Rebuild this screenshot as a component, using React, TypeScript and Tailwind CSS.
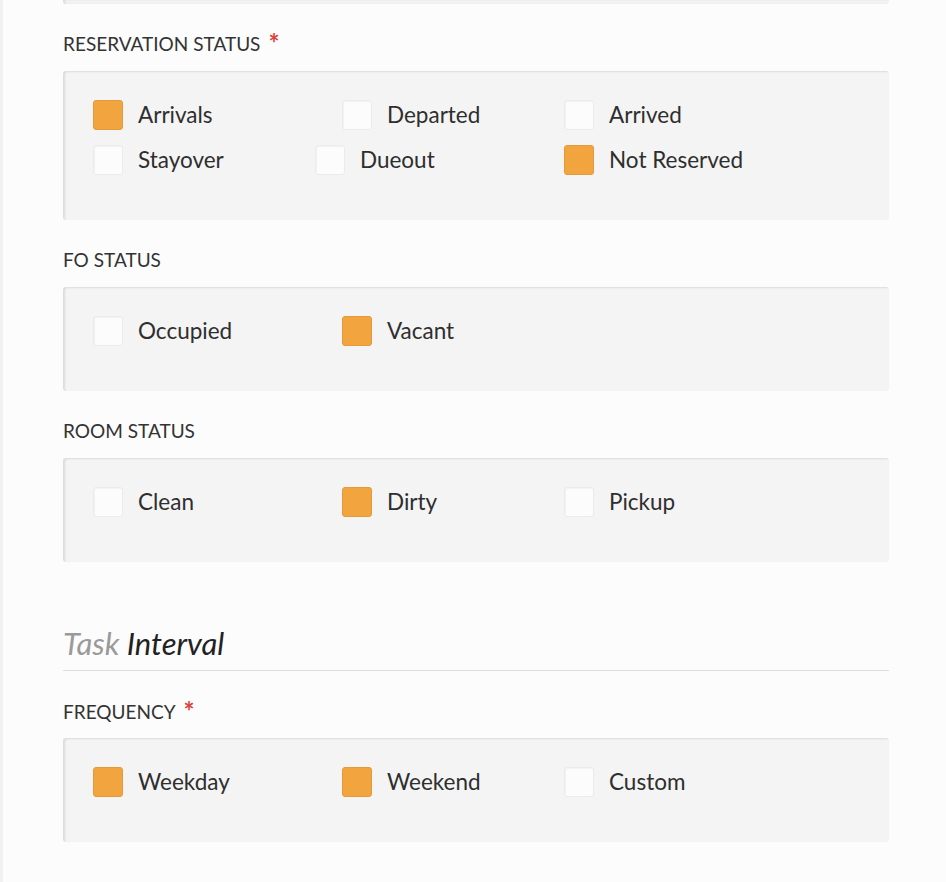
import React from "react";

type Opt = { label: string; checked?: boolean; w?: number };

// each row lists options; w is the width of the item box (px)
const RESERVATION: Opt[][] = [
  [
    { label: "Arrivals", checked: true, w: 249 },
    { label: "Departed", w: 222 },
    { label: "Arrived" },
  ],
  [
    { label: "Stayover", w: 222 },
    { label: "Dueout", w: 249 },
    { label: "Not Reserved", checked: true },
  ],
];

const FO: Opt[][] = [[{ label: "Occupied", w: 249 }, { label: "Vacant", checked: true }]];

const ROOM: Opt[][] = [
  [{ label: "Clean", w: 249 }, { label: "Dirty", checked: true, w: 222 }, { label: "Pickup" }],
];

const FREQUENCY: Opt[][] = [
  [
    { label: "Weekday", checked: true, w: 249 },
    { label: "Weekend", checked: true, w: 222 },
    { label: "Custom" },
  ],
];

function Checkbox({ checked }: { checked?: boolean }) {
  return (
    <span
      className={`block w-[30px] h-[30px] rounded-[3px] shrink-0 border ${
        checked
          ? "bg-[#f2a53f] border-[#e59a3a]"
          : "bg-[#fcfcfc] border-[#ebebeb] shadow-[inset_1px_1px_1px_rgba(0,0,0,0.04)]"
      }`}
    />
  );
}

function Required() {
  return (
    <span className="ml-[8px] text-[#d9433b] text-[26px] leading-[22px] font-bold">*</span>
  );
}

function FieldLabel({ text, required }: { text: string; required?: boolean }) {
  return (
    <div className="mt-[28px] mb-[15px] h-6 leading-6 text-[19px] text-[#333] uppercase flex">
      <span>{text}</span>
      {required && <Required />}
    </div>
  );
}

function Panel({ rows }: { rows: Opt[][] }) {
  return (
    <div className="bg-[#f4f4f4] rounded-[3px] pl-[30px] pt-[29px] pb-[30px] shadow-[inset_2px_1px_2px_rgba(0,0,0,0.1)]">
      {rows.map((row, i) => (
        <div key={i} className="flex">
          {row.map((o) => (
            <label
              key={o.label}
              className="flex items-center h-[30px] mb-[15px] gap-[15px]"
              style={o.w ? { width: o.w } : undefined}
            >
              <Checkbox checked={o.checked} />
              <span className="relative top-0 text-[22.5px] text-[#2e2e2e]">{o.label}</span>
            </label>
          ))}
        </div>
      ))}
    </div>
  );
}

export default function App() {
  return (
    <div
      className="min-h-screen bg-[#fcfcfc] flex"
      style={{ fontFamily: "Lato, 'Open Sans', sans-serif" }}
    >
      <div className="w-[3px] bg-[#f1f1f1] shrink-0" />
      <div className="ml-[60px] w-[826px] pb-10">
        <div className="h-[4px] bg-[#f4f4f4] rounded-b-[3px] shadow-[inset_2px_0_2px_rgba(0,0,0,0.1)]" />

        <FieldLabel text="Reservation Status" required />
        <Panel rows={RESERVATION} />

        <FieldLabel text="FO Status" />
        <Panel rows={FO} />

        <FieldLabel text="Room Status" />
        <Panel rows={ROOM} />

        <div className="mt-[63px] pb-[9px] border-b border-[#dedede]">
          <h2 className="text-[31px] leading-[36px] italic">
            <span className="text-[#9a9a9a]">Task</span>{" "}
            <span className="text-[#222]">Interval</span>
          </h2>
        </div>

        <div className="mt-[29px] mb-[14px] h-6 leading-6 text-[19px] text-[#333] uppercase flex">
          <span>Frequency</span>
          <Required />
        </div>
        <Panel rows={FREQUENCY} />
      </div>
    </div>
  );
}
